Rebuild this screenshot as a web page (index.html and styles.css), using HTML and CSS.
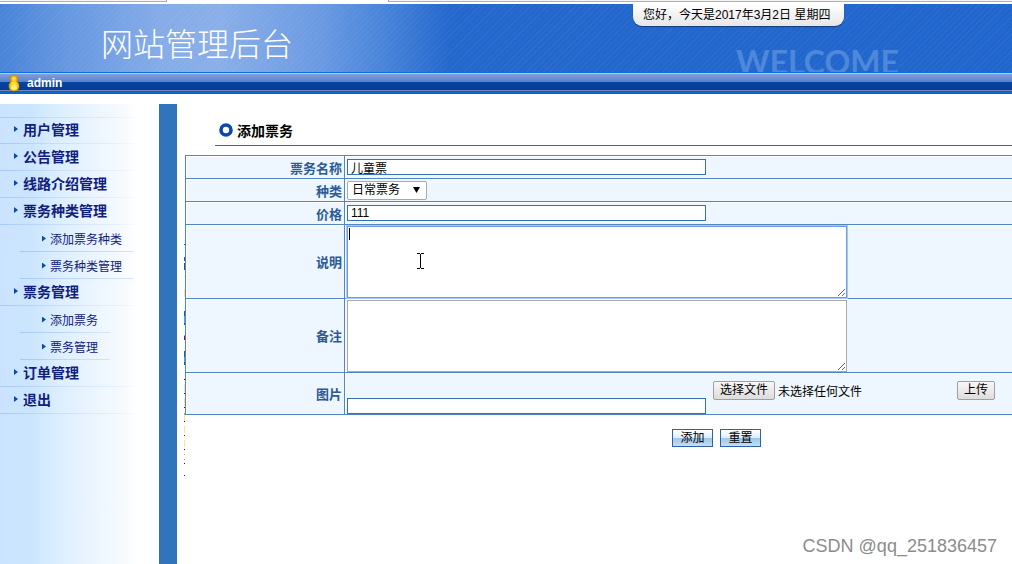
FILE: index.html
```
<!DOCTYPE html>
<html lang="zh-CN">
<head>
<meta charset="utf-8">
<title>网站管理后台</title>
<link rel="stylesheet" href="styles.css">
</head>
<body>
<div class="page">
  <div class="tabs"><span class="tab tab-left"></span><span class="tab-gap"></span><span class="tab tab-right"></span></div>
  <header class="banner">
    <h1 class="site-title">网站管理后台</h1>
    <div class="banner-right">
      <p class="today">您好，今天是2017年3月2日 星期四</p>
      <div class="welcome" aria-hidden="true">WELCOME</div>
    </div>
  </header>
  <div class="userbar">
    <svg class="user-icon" width="12" height="18" viewBox="0 0 12 18" aria-hidden="true">
      <defs><radialGradient id="gold" cx="50%" cy="65%" r="60%"><stop offset="0" stop-color="#fff27a"/><stop offset=".5" stop-color="#ffc800"/><stop offset="1" stop-color="#f0a000"/></radialGradient></defs>
      <path d="M6 1C3.600 1 2 2.800 2.200 4.500 2.300 5.900 2.800 6.700 3.500 7.500 1.500 8.500 .8 10 .9 12.500 1 15.500 3 17 6 17s5-1.500 5.100-4.500C11.200 10 10.500 8.500 8.500 7.500c.7-.8 1.200-1.600 1.300-3C10 2.800 8.400 1 6 1z" fill="url(#gold)" stroke="#b87400" stroke-width=".4"/>
      <ellipse cx="6" cy="13.500" rx="2.800" ry="2.200" fill="#fff47c"/>
      <circle cx="6" cy="4.600" r="1.800" fill="#ffe94b"/>
    </svg>
    <span>admin</span>
  </div>
  <div class="body">
    <nav class="sidebar">
      <ul class="menu">
        <li><a href="#">用户管理</a></li>
        <li><a href="#">公告管理</a></li>
        <li><a href="#">线路介绍管理</a></li>
        <li><a href="#">票务种类管理</a>
          <ul class="submenu">
            <li><a href="#">添加票务种类</a></li>
            <li><a href="#">票务种类管理</a></li>
          </ul>
        </li>
        <li><a href="#">票务管理</a>
          <ul class="submenu">
            <li><a href="#">添加票务</a></li>
            <li><a href="#">票务管理</a></li>
          </ul>
        </li>
        <li><a href="#">订单管理</a></li>
        <li><a href="#">退出</a></li>
      </ul>
    </nav>
    <div class="divider"></div>
    <main class="content">
      <svg class="specks" width="1" height="234" viewBox="0 0 1 234" aria-hidden="true">
        <g fill="#4a4f68"><path d="M0 1h1v1H0zM0 14h1v4H0zM0 20h1v7H0zM0 68h1v5H0zM0 80h1v2H0zM0 108h1v6H0zM0 119h1v3H0z"/></g>
        <g fill="#2fb4ee"><path d="M0 73h1v7H0zM0 114h1v5H0z"/></g>
        <g fill="#ffe293"><path d="M0 46h1v8H0zM0 33h1v1H0zM0 141h1v8H0zM0 155h1v8H0zM0 172h1v6H0zM0 183h1v7H0zM0 197h1v7H0z"/></g>
        <path fill="#a2004f" d="M0 93h1v4H0z"/>
        <path fill="#e09a2c" d="M0 92h1v1H0zM0 170h1v2H0zM0 211h1v1H0zM0 216h1v1H0z"/>
        <path fill="#222" d="M0 136h1v1H0zM0 150h1v1H0zM0 164h1v1H0zM0 178h1v1H0zM0 192h1v1H0zM0 206h1v1H0zM0 220h1v1H0zM0 232h1v1H0z"/>
      </svg>
      <h2 class="title">
        <svg width="14" height="14" viewBox="0 0 14 14" aria-hidden="true"><circle cx="7" cy="7" r="5" fill="#fff" stroke="#0b48ad" stroke-width="3.600"/></svg>
        添加票务
      </h2>
      <form class="ticket-form">
        <table class="grid">
          <tbody>
            <tr><th scope="row"><label for="name">票务名称</label></th><td><input class="text" id="name" type="text" value="儿童票"></td></tr>
            <tr><th scope="row"><label for="kind">种类</label></th><td>
              <div class="select-wrap"><select id="kind"><option>日常票务</option></select><svg class="arrow" width="7" height="6" viewBox="0 0 7 6" aria-hidden="true"><path d="M0 0h7L3.500 6z" fill="#000"/></svg></div>
            </td></tr>
            <tr><th scope="row"><label for="price">价格</label></th><td><input class="text" id="price" type="text" value="111"></td></tr>
            <tr><th scope="row"><label for="desc">说明</label></th><td>
              <div class="area-wrap"><textarea class="area active" id="desc"></textarea>
              <svg class="caret" width="1" height="12" aria-hidden="true"><path d="M0 0h1v12H0z"/></svg>
              <svg class="pointer" width="7" height="16" viewBox="0 0 7 16" aria-hidden="true"><path d="M0 .5h3M4 .5h3M3.500 1v14M0 15.500h3M4 15.500h3" fill="none" stroke="#000"/></svg></div>
            </td></tr>
            <tr><th scope="row"><label for="note">备注</label></th><td><div class="area-wrap"><textarea class="area" id="note"></textarea></div></td></tr>
            <tr><th scope="row"><label for="image">图片</label></th><td>
              <div class="upload">
                <input class="text" id="image" type="text">
                <div class="upload-box">
                  <label class="file"><input class="file-input" type="file"><span class="gray-btn">选择文件</span><span>未选择任何文件</span></label>
                  <button class="gray-btn" type="button">上传</button>
                </div>
              </div>
            </td></tr>
          </tbody>
        </table>
        <div class="actions"><button class="blue-btn" type="submit">添加</button><button class="blue-btn" type="reset">重置</button></div>
      </form>
    </main>
  </div>
  <div class="watermark">CSDN @qq_251836457</div>
</div>
</body>
</html>
```
FILE: styles.css
```
* { box-sizing: border-box; }
body, h1, h2, p, ul { margin: 0; padding: 0; }
body, input, select, button, textarea {
  font-family: "Liberation Sans", "Noto Sans CJK SC", sans-serif;
  font-size: 12px;
}
body { background: #fff; color: #000; }
ul { list-style: none; }
a { color: inherit; text-decoration: none; }
.page { position: relative; display: flex; flex-direction: column; min-height: 100vh; }

.tabs { display: flex; height: 4px; }
.tab { height: 2px; background: #f4f4f4; border-bottom: 1px solid #b0b0b0; }
.tab-left { width: 167px; border-right: 1px solid #999; }
.tab-gap { width: 221px; }
.tab-right { flex: 1; border-left: 1px solid #999; }

.banner {
  display: flex; justify-content: space-between; height: 68px; overflow: hidden;
  background:
    repeating-linear-gradient(135deg, rgba(255,255,255,.04) 0 1px, transparent 1px 4px),
    linear-gradient(90deg, #4884d8 0, #6496e0 60px, #85ace8 160px, #8aafe9 220px, #6b9ae2 320px, #4582d8 390px, #2468cd 450px, #2166cd 100%);
}
.site-title { padding: 17px 0 0 101px; font-size: 32px; line-height: 48px; font-weight: 300; color: #fff; }
.banner-right { width: 379px; }
.today {
  width: 211px; height: 22px; padding: 0 10px; line-height: 22px; white-space: nowrap;
  background: linear-gradient(#fff, #e6e6e8); border-radius: 0 0 9px 9px;
  box-shadow: 0 1px 1px #163c79;
}
.welcome { padding: 18px 0 0 103px; font-family: Lato, sans-serif; font-weight: 700; font-size: 32px; line-height: 36px; color: #4e88da; }

.userbar {
  display: flex; align-items: center; gap: 7px; height: 22px; padding-left: 8px;
  color: #fff; font-weight: 700;
  background: linear-gradient(#0f6fdb 0 1px, #aac9f3 1px 2px, #809fdb 2px, #587fcd 10px, #07439f 10px, #063b9b 18px, #7188b5 18px 19px, #0a64cc 19px);
}

.body { display: flex; flex: 1; margin-top: 10px; }
.sidebar {
  width: 159px; padding-top: 13px;
  background: linear-gradient(90deg, #cbe3ff 0, #cbe5ff 30px, #dcefff 60px, #eaf4ff 90px, #f5faff 120px, #fff 138px);
}
.menu { color: #10207c; font-size: 14px; font-weight: 700; background: linear-gradient(90deg, #a5c9f8, #d5e5fb 80px, transparent 144px) no-repeat 0 0 / 100% 1px; }
.menu a {
  display: flex; align-items: center; gap: 5px; height: 27px; padding: 0 0 3px 14px;
  background: linear-gradient(90deg, #a5c9f8, #d5e5fb 80px, transparent 144px) no-repeat 0 100% / 100% 1px;
}
.menu a::before { content: ""; width: 4px; height: 6px; background: #0a49ad; clip-path: polygon(0 0, 100% 50%, 0 100%); }
.submenu { width: max-content; margin-left: 20px; font-size: 12px; font-weight: 400; }
.menu .submenu a { padding: 0 12px 0 22px; gap: 4px; background: linear-gradient(90deg, #a5c9f8, #d5e5fb) no-repeat 0 100% / 100% 1px; }

.divider { width: 18px; background: #3074bc; }

.content { position: relative; flex: 1; min-width: 0; padding-left: 8px; }
.specks { position: absolute; left: 7px; top: 139px; }
.title {
  display: flex; align-items: center; gap: 4px; height: 42px; margin-left: 30px; padding: 11px 0 0 4px;
  font-size: 14px; border-bottom: 1px solid #3468b4;
}
.grid { width: 100%; margin-top: 9px; border-collapse: collapse; }
.grid th, .grid td { padding: 0 2px; border: 1px solid #5286be; background: #eef6ff; box-shadow: inset 1px 1px #fff; height: 23px; }
.grid th { width: 159px; text-align: right; font-size: 13px; color: #2c5a94; }
.grid td { border-right: 0; }
.text { display: block; width: 359px; height: 16px; padding: 0 3px; border: 1px solid #3870ae; background: #fff; }
.select-wrap { position: relative; width: 80px; height: 19px; }
select { display: block; width: 100%; height: 100%; padding: 0 4px; border: 1px solid #a9a9a9; border-radius: 2px; background: #fff; appearance: none; color: #000; }
.arrow { position: absolute; right: 7px; top: 6px; }
.area-wrap { position: relative; padding-top: 1px; }
.area { display: block; width: 500px; max-width: 100%; height: 72px; padding: 2px; border: 1px solid #a9a9a9; background: #fff; }
.active { border-color: #709ae0; box-shadow: 0 0 0 1px #a6c8fa; }
.caret { position: absolute; left: 2px; top: 3px; }
.pointer { position: absolute; left: 70px; top: 28px; }
.upload { display: flex; align-items: flex-end; gap: 7px; height: 41px; }
.upload-box { display: flex; align-items: flex-start; justify-content: space-between; flex: 1; height: 33px; padding-right: 15px; }
.file { position: relative; display: flex; align-items: center; gap: 3px; }
.file-input { position: absolute; inset: 0; width: 100%; opacity: 0; }
.gray-btn { height: 19px; padding: 0 6px; line-height: 17px; border: 1px solid #a0a0a0; border-radius: 2px; background: linear-gradient(#f8f6f6, #dedcdc); color: #000; white-space: nowrap; }
.actions { display: flex; justify-content: center; gap: 7px; margin-top: 14px; padding-left: 236px; }
.blue-btn { width: 41px; height: 18px; padding: 0; line-height: 16px; border: 1px solid #2c62a8; background: linear-gradient(#fff, #dfedfa 48%, #9bc5e8 50%, #c9def3); color: #000; }
.watermark { position: absolute; right: 15px; bottom: 6px; font-size: 18px; line-height: 24px; color: #8c8c8c; }
```
